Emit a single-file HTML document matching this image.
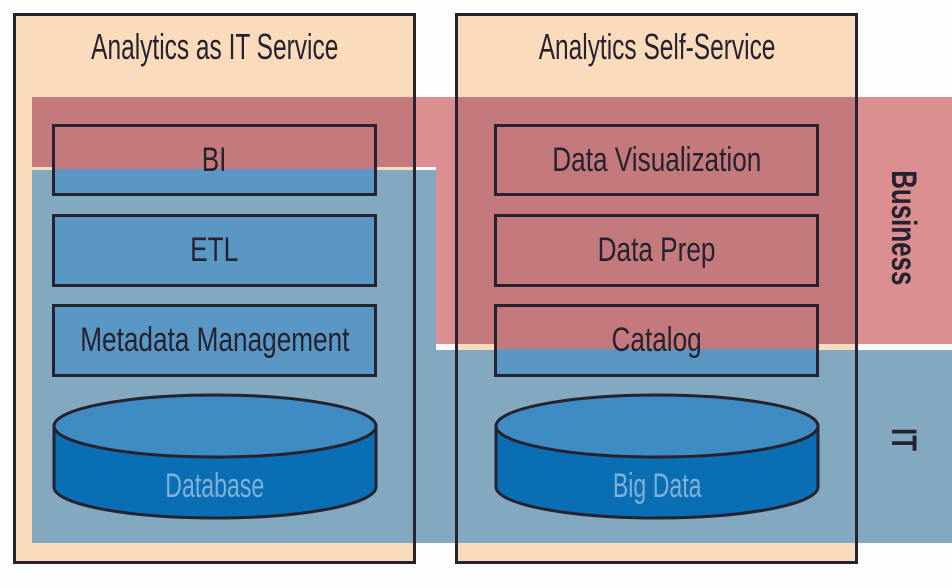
<!DOCTYPE html>
<html><head><meta charset="utf-8"><style>
*{margin:0;padding:0;box-sizing:border-box}
body{width:952px;height:588px;background:#fdfdfd;position:relative;overflow:hidden;font-family:"Liberation Sans",sans-serif;color:#27222f}
.r{position:absolute}
.panel{position:absolute;border:3px solid #27222f}
.box{position:absolute;border:3px solid #27222f;display:flex;align-items:center;justify-content:center}
.t{display:inline-block;transform:scaleX(0.68);white-space:nowrap}
.title{position:absolute;width:400px;text-align:center;font-size:36px;top:26px}
.bt{font-size:34px;transform:scaleX(0.77)}
</style></head><body>
<div class="r" style="left:13px;top:13px;width:403px;height:551px;background:#fadcbd"></div>
<div class="r" style="left:455px;top:13px;width:403px;height:551px;background:#fadcbd"></div>
<div class="r" style="left:32px;top:97px;width:384px;height:70px;background:#c47a7c"></div>
<div class="r" style="left:416px;top:97px;width:20px;height:70px;background:#dc8f91"></div>
<div class="r" style="left:436px;top:97px;width:19px;height:247px;background:#dc8f91"></div>
<div class="r" style="left:455px;top:97px;width:403px;height:247px;background:#c47a7c"></div>
<div class="r" style="left:858px;top:97px;width:94px;height:247px;background:#dc8f91"></div>
<div class="r" style="left:32px;top:170px;width:404px;height:373px;background:#83a9c1"></div>
<div class="r" style="left:436px;top:350px;width:516px;height:193px;background:#83a9c1"></div>
<div class="panel" style="left:13px;top:13px;width:403px;height:551px"></div>
<div class="panel" style="left:455px;top:13px;width:403px;height:551px"></div>
<div class="title" style="left:15px"><span class="t">Analytics as IT Service</span></div>
<div class="title" style="left:457px"><span class="t">Analytics Self-Service</span></div>
<div class="box" style="left:52px;top:124px;width:325px;height:72px;background:linear-gradient(#c47a7c 0,#c47a7c 40px,#5a97c4 44px)"><span class="t bt">BI</span></div>
<div class="box" style="left:52px;top:214px;width:325px;height:73px;background:#5a97c4"><span class="t bt">ETL</span></div>
<div class="box" style="left:52px;top:304px;width:325px;height:73px;background:#5a97c4"><span class="t bt">Metadata Management</span></div>
<div class="box" style="left:494px;top:124px;width:325px;height:72px;background:#c47a7c"><span class="t bt">Data Visualization</span></div>
<div class="box" style="left:494px;top:214px;width:325px;height:73px;background:#c47a7c"><span class="t bt">Data Prep</span></div>
<div class="box" style="left:494px;top:304px;width:325px;height:73px;background:linear-gradient(#c47a7c 0,#c47a7c 40px,#5a97c4 44px)"><span class="t bt">Catalog</span></div>
<svg class="r" style="left:0;top:0" width="952" height="588">
<g stroke="#27222f" stroke-width="3">
<path d="M54 426 L54 487 A161 31 0 0 0 376 487 L376 426 Z" fill="#0a6eb4"/>
<ellipse cx="215" cy="426" rx="161" ry="31" fill="#3f8cc4"/>
<path d="M496 426 L496 487 A161 31 0 0 0 818 487 L818 426 Z" fill="#0a6eb4"/>
<ellipse cx="657" cy="426" rx="161" ry="31" fill="#3f8cc4"/>
</g>
</svg>
<div class="r" style="left:15px;top:467px;width:400px;text-align:center;font-size:34px;color:#7fb0d6"><span class="t">Database</span></div>
<div class="r" style="left:457px;top:467px;width:400px;text-align:center;font-size:34px;color:#7fb0d6"><span class="t">Big Data</span></div>
<div class="r" style="left:833px;top:200px;width:140px;text-align:center;font-size:35px;font-weight:bold;transform:rotate(90deg)"><span class="t" style="transform:scaleX(0.74)">Business</span></div>
<div class="r" style="left:833px;top:420px;width:140px;text-align:center;font-size:35px;font-weight:bold;transform:rotate(90deg)"><span class="t" style="transform:scaleX(0.74)">IT</span></div>
</body></html>
